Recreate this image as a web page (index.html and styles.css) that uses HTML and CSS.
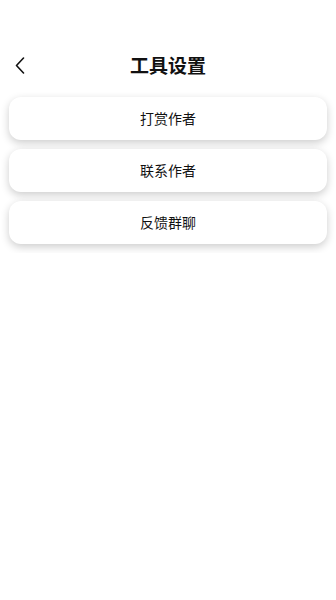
FILE: index.html
```html
<!DOCTYPE html>
<html lang="zh-CN">
  <head>
    <meta charset="UTF-8" />
    <meta name="viewport" content="width=device-width, initial-scale=1.0" />
    <title>工具设置</title>
    <link rel="stylesheet" href="styles.css">
  </head>
  <body>
    <div class="header">
      <div class="back">
        <svg width="12" height="17" viewBox="0 0 12 17">
          <path d="M9.5 1 L2.5 8.5 L9.5 16" fill="none" stroke="#111" stroke-width="1.6" stroke-linecap="round" stroke-linejoin="round" />
        </svg>
      </div>
      <h1 class="title">工具设置</h1>
    </div>

    <div class="list">
      <div class="item">打赏作者</div>
      <div class="item">联系作者</div>
      <div class="item">反馈群聊</div>
    </div>
  </body>
</html>
```

FILE: styles.css
```css
body {
  margin: 0;
  background: #fff;
  font-family: "Noto Sans CJK SC", "Noto Sans", sans-serif;
  color: #111;
}
.header {
  position: relative;
  box-sizing: border-box;
  margin-top: 44px;
  height: 44px;
  padding-bottom: 4px;
  display: flex;
  justify-content: center;
  align-items: center;
}
.back {
  position: absolute;
  left: 14px;
  top: 13px;
  width: 12px;
  height: 17px;
}
.back svg {
  display: block;
}
.title {
  margin: 0;
  font-size: 19px;
  font-weight: bold;
  line-height: 1;
}
.list {
  padding: 9px 9px;
  display: flex;
  flex-direction: column;
  gap: 9px;
}
.item {
  height: 43px;
  border-radius: 12px;
  background: #fff;
  box-shadow: 0 3px 8px rgba(0, 0, 0, 0.2);
  display: flex;
  justify-content: center;
  align-items: center;
  font-size: 14px;
  padding-bottom: 2px;
  box-sizing: border-box;
}
```
